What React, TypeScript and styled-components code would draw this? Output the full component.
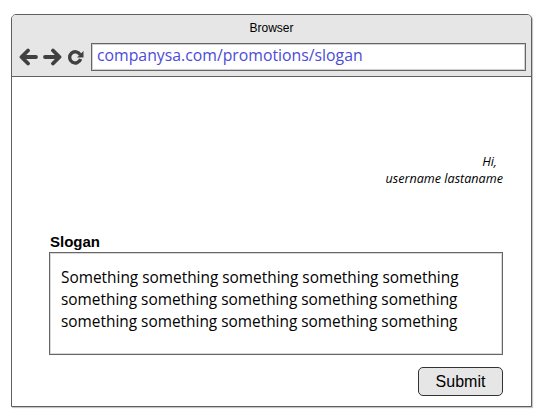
import React from "react";
import styled, { createGlobalStyle } from "styled-components";

const Global = createGlobalStyle`
  html, body { margin: 0; padding: 0; background: #ffffff; }
  body { font-family: "Liberation Sans", Arial, sans-serif; }
`;

const Page = styled.div`
  width: 545px;
  height: 420px;
  padding: 14px 0 0 11px;
  box-sizing: border-box;
`;

const Frame = styled.div`
  width: 521px;
  height: 393px;
  box-sizing: border-box;
  border: 1px solid #5f5f5f;
  border-radius: 5px 5px 0 0;
  box-shadow: 1px 1px 1px rgba(0, 0, 0, 0.25);
  display: flex;
  flex-direction: column;
  background: #ffffff;
  overflow: hidden;
`;

const Header = styled.div`
  height: 62px;
  background: #e6e6e6;
  border-bottom: 1px solid #5f5f5f;
  box-sizing: border-box;
  display: flex;
  flex-direction: column;
`;

const Title = styled.div`
  font-family: "Liberation Sans", Arial, sans-serif;
  font-size: 12px;
  color: #000;
  text-align: center;
  padding-top: 6px;
  height: 22px;
  box-sizing: border-box;
`;

const NavRow = styled.div`
  display: flex;
  align-items: center;
  padding: 6px 5px 0 7px;
`;

const NavIcon = styled.svg<{ $gap?: number }>`
  display: block;
  flex: none;
  margin-left: ${(p) => p.$gap ?? 0}px;
`;

const UrlBox = styled.div`
  margin-left: 7px;
  flex: 1;
  height: 28px;
  box-sizing: border-box;
  border: 1px solid #666;
  box-shadow: inset 0 0 0 1px #d0d0d0;
  background: #fff;
  font-family: "Open Sans", "Noto Sans", sans-serif;
  font-size: 15.8px;
  color: #4b4bd8;
  padding: 0 0 0 5px;
  line-height: 23px;
  white-space: nowrap;
`;

const Content = styled.div`
  flex: 1;
  display: flex;
  flex-direction: column;
  padding: 0 28px 0 37px;
`;

const Greeting = styled.div`
  margin-top: 76px;
  align-self: flex-end;
  text-align: right;
  font-family: "Open Sans", "Noto Sans", sans-serif;
  font-style: italic;
  font-size: 12.6px;
  line-height: 17px;
  color: #000;
`;

const GreetLine = styled.div<{ $indent?: number }>`
  padding-right: ${(p) => p.$indent ?? 0}px;
`;

const Label = styled.div`
  margin-top: 46px;
  margin-left: 1px;
  font-family: "Liberation Sans", Arial, sans-serif;
  font-weight: bold;
  font-size: 15px;
  line-height: 18px;
  color: #000;
`;

const TextBox = styled.div`
  margin-top: 1px;
  height: 103px;
  box-sizing: border-box;
  border: 1px solid #666;
  box-shadow: inset 0 0 0 1px #d8d8d8;
  padding: 14px 0 0 11px;
  font-family: "Open Sans", "Noto Sans", sans-serif;
  font-size: 15.4px;
  line-height: 22px;
  color: #000;
`;

const Actions = styled.div`
  display: flex;
  justify-content: flex-end;
  margin-top: 12px;
`;

const Button = styled.button`
  width: 85px;
  height: 29px;
  box-sizing: border-box;
  border: 1px solid #333;
  border-radius: 5px;
  background: #e6e6e6;
  font-family: "Liberation Sans", Arial, sans-serif;
  font-size: 16px;
  color: #000;
  padding: 0;
`;

const Back = () => (
  <NavIcon width="19" height="18" viewBox="0 0 19 18">
    <path d="M17 9 H3 M9 2.5 L2.5 9 L9 15.5" fill="none" stroke="#404040" strokeWidth="3.8" strokeLinecap="round" strokeLinejoin="round" />
  </NavIcon>
);

const Forward = () => (
  <NavIcon width="19" height="18" viewBox="0 0 19 18" $gap={5}>
    <path d="M2 9 H16 M10 2.5 L16.5 9 L10 15.5" fill="none" stroke="#404040" strokeWidth="3.8" strokeLinecap="round" strokeLinejoin="round" />
  </NavIcon>
);

const Refresh = () => (
  <NavIcon width="17" height="18" viewBox="0 0 17 18" $gap={5}>
    <path d="M13.2 6.8 A5.6 5.6 0 1 0 13.6 11" fill="none" stroke="#404040" strokeWidth="3.4" />
    <path d="M16.5 3 L16.5 9.5 L10 9.5 Z" fill="#404040" />
  </NavIcon>
);

export default function App() {
  return (
    <>
      <Global />
      <Page>
        <Frame>
          <Header>
            <Title>Browser</Title>
            <NavRow>
              <Back />
              <Forward />
              <Refresh />
              <UrlBox>companysa.com/promotions/slogan</UrlBox>
            </NavRow>
          </Header>
          <Content>
            <Greeting>
              <GreetLine $indent={6}>Hi,</GreetLine>
              <GreetLine>username lastaname</GreetLine>
            </Greeting>
            <Label>Slogan</Label>
            <TextBox>
              Something something something something something
              <br />
              something something something something something
              <br />
              something something something something something
            </TextBox>
            <Actions>
              <Button>Submit</Button>
            </Actions>
          </Content>
        </Frame>
      </Page>
    </>
  );
}
